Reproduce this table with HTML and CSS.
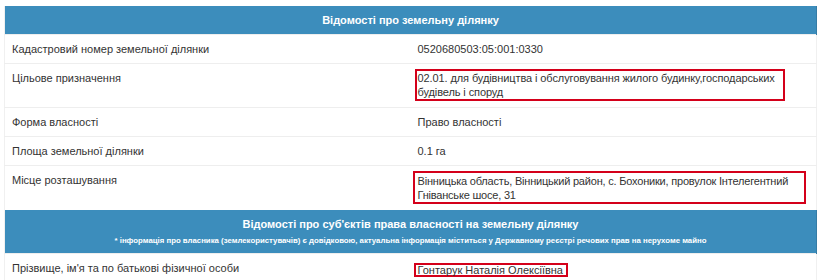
FILE: index.html
```html
<!DOCTYPE html>
<html lang="uk">
<head>
<meta charset="utf-8">
<link rel="stylesheet" href="styles.css">
</head>
<body>
<div class="wrap">
  <table class="info">
    <tr class="head"><th colspan="2">Відомості про земельну ділянку</th></tr>
    <tr><td>Кадастровий номер земельної ділянки</td><td>0520680503:05:001:0330</td></tr>
    <tr><td>Цільове призначення</td><td><div class="mark mark-purpose">02.01. для будівництва і обслуговування жилого будинку,господарських будівель і споруд</div></td></tr>
    <tr><td>Форма власності</td><td>Право власності</td></tr>
    <tr><td>Площа земельної ділянки</td><td>0.1 га</td></tr>
    <tr><td>Місце розташування</td><td><div class="mark mark-place">Вінницька область, Вінницький район, с. Бохоники, провулок Інтелегентний Гніванське шосе, 31</div></td></tr>
    <tr class="head head2"><th colspan="2">Відомості про суб'єктів права власності на земельну ділянку<div class="note">* інформація про власника (землекористувачів) є довідковою, актуальна інформація міститься у Державному реєстрі речових прав на нерухоме майно</div></th></tr>
    <tr><td>Прізвище, ім'я та по батькові фізичної особи</td><td><div class="mark mark-name">Гонтарук Наталія Олексіївна</div></td></tr>
  </table>
</div>
</body>
</html>
```

FILE: styles.css
```css
html, body {
  margin: 0;
  background: #ffffff;
}
.wrap {
  padding: 6px 3px 0 4px;
}
.info {
  width: 813px;
  border-collapse: collapse;
  table-layout: fixed;
  font-family: "Liberation Sans", Arial, sans-serif;
  font-size: 11px;
  line-height: 16px;
  color: #333333;
  border-left: 1px solid #f0f0f0;
  border-right: 1px solid #f0f0f0;
}
.info td {
  padding: 6px 7px 6px 7px;
  border-top: 1px solid #eeeeee;
  vertical-align: top;
}
.info td:first-child {
  width: 392px;
}
.head th {
  background: #3c8dbc;
  color: #ffffff;
  font-weight: bold;
  text-align: center;
  padding: 6px 7px;
  height: 16px;
  border-right: 1px solid #357ca5;
}
.head2 th {
  padding: 6px 7px 7px;
}
.note {
  font-size: 7.8px;
  line-height: 11px;
  margin-top: 3px;
}
.mark {
  border: 2px solid #d4001a;
  box-sizing: border-box;
}
.mark-purpose {
  width: 370px;
  margin: -1px 0 0 -3px;
  padding: 0 0 0 1px;
  line-height: 14px;
  letter-spacing: -0.1px;
}
.mark-place {
  width: 393px;
  margin: -1px 0 0 -5px;
  padding: 1px 0 0 3px;
  line-height: 14px;
  letter-spacing: -0.2px;
}
.mark-name {
  width: 154px;
  margin: 3px 0 -4px -4px;
  padding: 0 2px;
  line-height: 10px;
  white-space: nowrap;
}
```
